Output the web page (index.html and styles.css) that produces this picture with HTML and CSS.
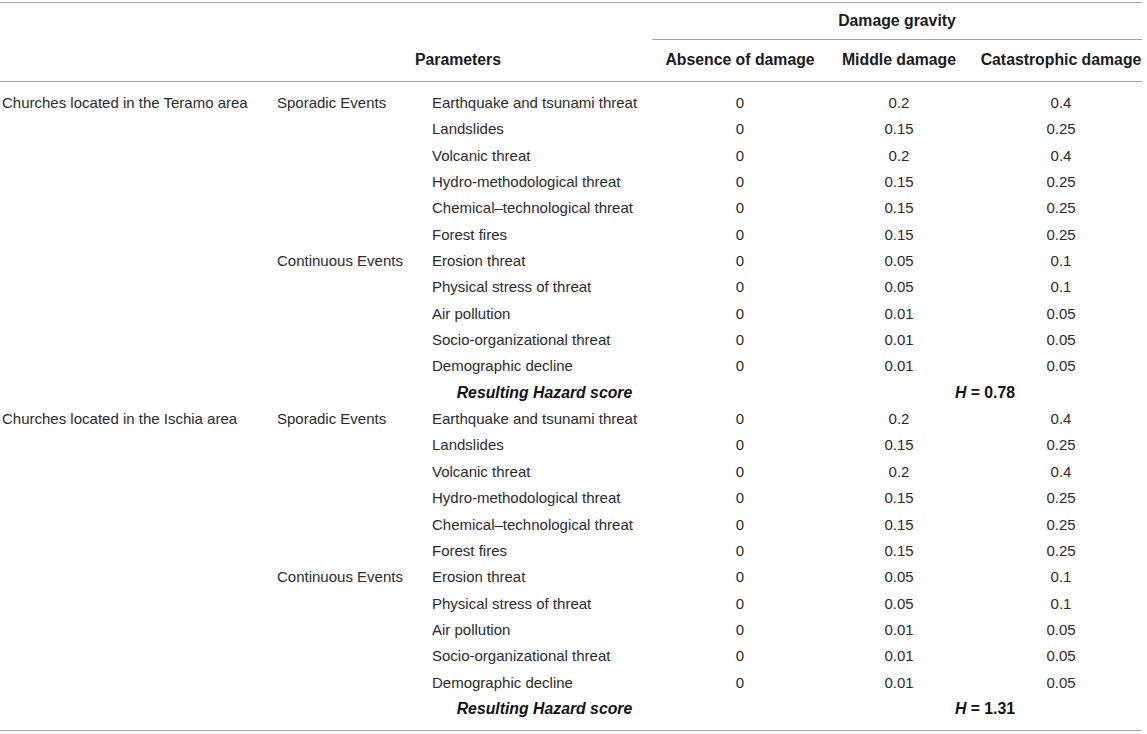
FILE: index.html
```html
<!DOCTYPE html>
<html lang="en">
<head>
<meta charset="utf-8">
<title>Hazard table</title>
<link rel="stylesheet" href="styles.css">
</head>
<body>
<table class="hz">
  <colgroup>
    <col class="c1"><col class="c2"><col class="c3"><col class="c4"><col class="c5"><col class="c6">
  </colgroup>
  <thead>
    <tr class="h1">
      <th colspan="3"></th>
      <th colspan="3" class="gravity">Damage gravity</th>
    </tr>
    <tr class="h2">
      <th></th>
      <th colspan="2" class="params">Parameters</th>
      <th>Absence of damage</th>
      <th>Middle damage</th>
      <th class="v6">Catastrophic damage</th>
    </tr>
  </thead>
  <tbody>
    <tr class="first"><td class="t1">Churches located in the Teramo area</td><td class="t2">Sporadic Events</td><td class="t3">Earthquake and tsunami threat</td><td class="v">0</td><td class="v">0.2</td><td class="v v6">0.4</td></tr>
    <tr><td></td><td></td><td class="t3">Landslides</td><td class="v">0</td><td class="v">0.15</td><td class="v v6">0.25</td></tr>
    <tr><td></td><td></td><td class="t3">Volcanic threat</td><td class="v">0</td><td class="v">0.2</td><td class="v v6">0.4</td></tr>
    <tr><td></td><td></td><td class="t3">Hydro-methodological threat</td><td class="v">0</td><td class="v">0.15</td><td class="v v6">0.25</td></tr>
    <tr><td></td><td></td><td class="t3">Chemical–technological threat</td><td class="v">0</td><td class="v">0.15</td><td class="v v6">0.25</td></tr>
    <tr><td></td><td></td><td class="t3">Forest fires</td><td class="v">0</td><td class="v">0.15</td><td class="v v6">0.25</td></tr>
    <tr><td></td><td class="t2">Continuous Events</td><td class="t3">Erosion threat</td><td class="v">0</td><td class="v">0.05</td><td class="v v6">0.1</td></tr>
    <tr><td></td><td></td><td class="t3">Physical stress of threat</td><td class="v">0</td><td class="v">0.05</td><td class="v v6">0.1</td></tr>
    <tr><td></td><td></td><td class="t3">Air pollution</td><td class="v">0</td><td class="v">0.01</td><td class="v v6">0.05</td></tr>
    <tr><td></td><td></td><td class="t3">Socio-organizational threat</td><td class="v">0</td><td class="v">0.01</td><td class="v v6">0.05</td></tr>
    <tr><td></td><td></td><td class="t3">Demographic decline</td><td class="v">0</td><td class="v">0.01</td><td class="v v6">0.05</td></tr>
    <tr class="score"><td></td><td></td><td class="res">Resulting Hazard score</td><td></td><td colspan="2" class="hval"><i>H</i> = 0.78</td></tr>
    <tr><td class="t1">Churches located in the Ischia area</td><td class="t2">Sporadic Events</td><td class="t3">Earthquake and tsunami threat</td><td class="v">0</td><td class="v">0.2</td><td class="v v6">0.4</td></tr>
    <tr><td></td><td></td><td class="t3">Landslides</td><td class="v">0</td><td class="v">0.15</td><td class="v v6">0.25</td></tr>
    <tr><td></td><td></td><td class="t3">Volcanic threat</td><td class="v">0</td><td class="v">0.2</td><td class="v v6">0.4</td></tr>
    <tr><td></td><td></td><td class="t3">Hydro-methodological threat</td><td class="v">0</td><td class="v">0.15</td><td class="v v6">0.25</td></tr>
    <tr><td></td><td></td><td class="t3">Chemical–technological threat</td><td class="v">0</td><td class="v">0.15</td><td class="v v6">0.25</td></tr>
    <tr><td></td><td></td><td class="t3">Forest fires</td><td class="v">0</td><td class="v">0.15</td><td class="v v6">0.25</td></tr>
    <tr><td></td><td class="t2">Continuous Events</td><td class="t3">Erosion threat</td><td class="v">0</td><td class="v">0.05</td><td class="v v6">0.1</td></tr>
    <tr><td></td><td></td><td class="t3">Physical stress of threat</td><td class="v">0</td><td class="v">0.05</td><td class="v v6">0.1</td></tr>
    <tr><td></td><td></td><td class="t3">Air pollution</td><td class="v">0</td><td class="v">0.01</td><td class="v v6">0.05</td></tr>
    <tr><td></td><td></td><td class="t3">Socio-organizational threat</td><td class="v">0</td><td class="v">0.01</td><td class="v v6">0.05</td></tr>
    <tr><td></td><td></td><td class="t3">Demographic decline</td><td class="v">0</td><td class="v">0.01</td><td class="v v6">0.05</td></tr>
    <tr class="score last"><td></td><td></td><td class="res">Resulting Hazard score</td><td></td><td colspan="2" class="hval"><i>H</i> = 1.31</td></tr>
  </tbody>
</table>
</body>
</html>
```
FILE: styles.css
```css
html, body {
  margin: 0;
  padding: 0;
  background: #ffffff;
}

body {
  padding-top: 2px;
  font-family: "Liberation Sans", Arial, Helvetica, sans-serif;
  font-size: 15px;
  color: #2b2b2b;
}

.hz {
  width: 1142px;
  table-layout: fixed;
  border-collapse: separate;
  border-spacing: 0;
  border-top: 1px solid #a3a3a3;
  border-bottom: 1px solid #a3a3a3;
}

.c1 { width: 272px; }
.c2 { width: 155px; }
.c3 { width: 225px; }
.c4 { width: 176px; }
.c5 { width: 142px; }
.c6 { width: 172px; }

.hz th {
  font-weight: bold;
  font-size: 15.8px;
  color: #1a1a1a;
  text-align: center;
  padding: 0;
  white-space: nowrap;
}

.h1 th {
  height: 36px;
  vertical-align: middle;
}

.h1 .gravity {
  border-bottom: 1px solid #a3a3a3;
}

.h2 th {
  height: 40px;
  padding-bottom: 1px;
  border-bottom: 1px solid #a3a3a3;
  vertical-align: middle;
}

.h2 .params {
  padding-right: 8px;
}

.hz td {
  padding: 0;
  line-height: 26.35px;
  height: 26.35px;
  white-space: nowrap;
  vertical-align: middle;
}

.hz tr.first td {
  padding-top: 8px;
}

.hz tr.last td {
  padding-bottom: 8px;
}

.t1 { padding-left: 2px !important; }
.t2 { padding-left: 5px !important; }
.t3 { padding-left: 5px !important; }

.v {
  text-align: center;
}

.hz .v6 {
  padding-left: 10px;
}

.res {
  font-weight: bold;
  font-style: italic;
  font-size: 15.8px;
  color: #111;
  text-align: center;
  padding-left: 10px !important;
}

.hval {
  font-weight: bold;
  font-size: 15.8px;
  color: #111;
  text-align: center;
}
```
